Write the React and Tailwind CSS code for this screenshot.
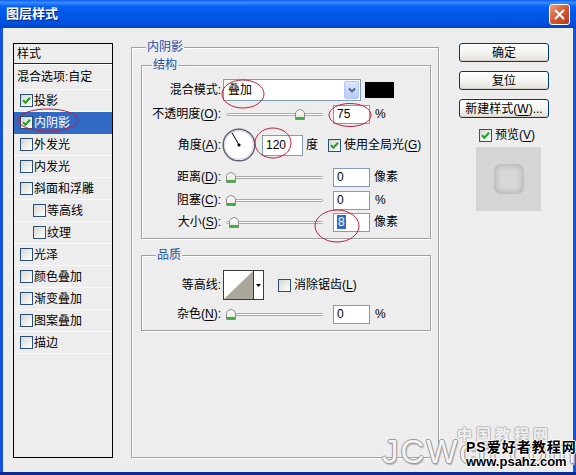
import React from "react";

function Check({ checked }) {
  return (
    <span className="flex h-[13px] w-[13px] shrink-0 items-center justify-center border border-[#2A4F7A] bg-linear-to-br from-[#D6D6D0] to-white">
      {checked && (
        <svg width="9" height="9" viewBox="0 0 9 9">
          <path d="M1 4.3 L3.4 6.8 L8 1.8" fill="none" stroke="#21A121" strokeWidth="2" />
        </svg>
      )}
    </span>
  );
}

function U({ children }) {
  return <span className="underline underline-offset-[2px]">{children}</span>;
}

function Label({ children }) {
  return <div className="w-[79px] shrink-0 text-right leading-[14px]">{children}</div>;
}

function Thumb({ left }) {
  return (
    <svg className="absolute top-[2px]" style={{ left }} width="10" height="11" viewBox="0 0 10 11">
      <defs>
        <linearGradient id="tg" x1="0" y1="0" x2="0" y2="1">
          <stop offset="0" stopColor="#FFFFFF" />
          <stop offset="1" stopColor="#E2E2DC" />
        </linearGradient>
      </defs>
      <path d="M0.5 5 Q0.5 1.5 5 0.5 Q9.5 1.5 9.5 5 L9.5 10.5 L0.5 10.5 Z" fill="url(#tg)" stroke="#8C8C8C" strokeWidth="1" />
      <rect x="1" y="8" width="8" height="2.2" fill="#3DAF3D" />
    </svg>
  );
}

function Slider({ left }) {
  return (
    <div className="relative ml-[5px] h-[14px] w-[97px] shrink-0">
      <div className="absolute left-0 right-0 top-[6px] h-[3px] rounded-full border border-[#A9A9A9] bg-[#FAFAFA]" />
      <Thumb left={left} />
    </div>
  );
}

function Input({ children }) {
  return (
    <div className="ml-[10px] flex h-[19px] w-[37px] shrink-0 items-center border border-[#7F9DB9] bg-white pl-[3px] leading-[14px]">
      {children}
    </div>
  );
}

function Group({ title, labelPos, className, children }) {
  return (
    <div
      className={
        "relative shrink-0 border border-[#A2A2A2] shadow-[1px_1px_0_#ffffff,inset_1px_1px_0_#ffffff] " +
        className
      }
    >
      <div className={"absolute top-[-8px] bg-[#EDEDED] px-[1px] leading-[14px] text-[#1D4FA6] " + labelPos}>
        {title}
      </div>
      {children}
    </div>
  );
}

function Button({ children }) {
  return (
    <div className="flex h-[19px] w-[90px] items-center justify-center rounded-[3px] border border-[#003C74] bg-linear-to-b from-white via-[#F4F4F0] to-[#E2E1DA] leading-[14px] shadow-[inset_0_-1px_0_#D6D0C5]">
      {children}
    </div>
  );
}

const items = [
  { t: "投影", c: true },
  { t: "内阴影", c: true, sel: true },
  { t: "外发光" },
  { t: "内发光" },
  { t: "斜面和浮雕" },
  { t: "等高线", ind: true },
  { t: "纹理", ind: true },
  { t: "光泽" },
  { t: "颜色叠加" },
  { t: "渐变叠加" },
  { t: "图案叠加" },
  { t: "描边" },
];

export default function App() {
  return (
    <div className="relative flex h-[475px] w-[576px] flex-col overflow-hidden border-b-[3px] border-[#0C2C93] bg-[#1453DB] font-['Liberation_Sans','Noto_Sans_CJK_SC',sans-serif] text-[12px] text-black">
      {/* Title bar */}
      <div className="flex h-[28px] shrink-0 items-center justify-between bg-[linear-gradient(to_bottom,#0A5EF0_0%,#3B8CFB_9%,#0763F4_22%,#0057E7_50%,#0053E0_80%,#0044CD_100%)] pl-[6px] pr-[6px]">
        <span className="text-[13px] font-bold leading-[16px] text-white [text-shadow:1px_1px_0_#0A2780]">图层样式</span>
        <div className="flex h-[21px] w-[21px] items-center justify-center rounded-[3px] border border-white bg-linear-to-br from-[#EC9A7C] via-[#D5582F] to-[#B8381A]">
          <svg width="11" height="11" viewBox="0 0 11 11">
            <path d="M1.5 1.5 L9.5 9.5 M9.5 1.5 L1.5 9.5" stroke="#fff" strokeWidth="2" strokeLinecap="round" />
          </svg>
        </div>
      </div>

      {/* Client area */}
      <div className="mx-[3px] flex h-[444px] items-start bg-[#EDEDED]">
        {/* Style list */}
        <div className="ml-[10px] mt-[15px] flex h-[415px] w-[100px] shrink-0 flex-col border border-black">
          <div className="flex h-[20px] items-center border-b border-[#2A2A2A] pl-[3px] leading-[14px] shadow-[0_1px_0_#ffffff]">样式</div>
          <div className="flex h-[26px] items-center border-b border-[#FBFBFB] pl-[3px] leading-[14px]">混合选项:自定</div>
          {items.map((it) => (
            <div
              key={it.t}
              className={
                "flex h-[22px] items-center gap-[1px] border-b leading-[14px] " +
                (it.sel ? "border-[#316AC5] bg-[#316AC5] text-white " : "border-[#FBFBFB] ") +
                (it.ind ? "pl-[19px]" : "pl-[6px]")
              }
            >
              <Check checked={it.c} />
              <span>{it.t}</span>
            </div>
          ))}
        </div>

        {/* Inner shadow panel */}
        <Group title="内阴影" labelPos="left-[14px]" className="ml-[18px] mt-[19px] h-[411px] w-[308px]">
          <Group title="结构" labelPos="left-[10px]" className="ml-[9px] mt-[17px] h-[174px] w-[290px]">
            <div className="flex flex-col pt-[13px]">
              {/* Blend mode */}
              <div className="flex h-[22px] items-center">
                <Label>混合模式:</Label>
                <div className="ml-[2px] flex h-[22px] w-[138px] items-center justify-between border border-[#7F9DB9] bg-white pl-[4px] pr-[1px]">
                  <span className="leading-[14px]">叠加</span>
                  <div className="flex h-[18px] w-[15px] items-center justify-center rounded-[2px] border border-[#B4C8F6] bg-linear-to-b from-[#DCE6FE] to-[#B6CAF7]">
                    <svg width="8" height="6" viewBox="0 0 8 6">
                      <path d="M1 1.5 L4 4.5 L7 1.5" fill="none" stroke="#4D6185" strokeWidth="1.8" />
                    </svg>
                  </div>
                </div>
                <div className="ml-[4px] h-[16px] w-[29px] bg-black" />
              </div>
              {/* Opacity */}
              <div className="mt-[3px] flex h-[20px] items-center">
                <Label>
                  不透明度(<U>O</U>):
                </Label>
                <Slider left={69} />
                <Input>75</Input>
                <span className="ml-[5px] leading-[14px]">%</span>
              </div>
              {/* Angle */}
              <div className="mt-[4px] flex h-[34px] items-center">
                <Label>
                  角度(<U>A</U>):
                </Label>
                <svg width="34" height="34" viewBox="0 0 34 34" className="ml-[1px] shrink-0">
                  <circle cx="17" cy="17" r="15.8" fill="#fff" stroke="#5E6271" strokeWidth="1.5" />
                  <circle cx="17" cy="17" r="14.4" fill="none" stroke="#D3D6E0" strokeWidth="1" />
                  <line x1="17" y1="17" x2="10" y2="4.9" stroke="#000" strokeWidth="1" />
                  <circle cx="17" cy="17" r="1.6" fill="#000" />
                </svg>
                <div className="ml-[6px] flex h-[21px] w-[41px] shrink-0 items-center border border-[#7F9DB9] bg-white pl-[3px] leading-[14px]">120</div>
                <span className="ml-[3px] leading-[14px]">度</span>
                <div className="ml-[10px] flex items-center gap-[3px]">
                  <Check checked />
                  <span className="leading-[14px]">
                    使用全局光(<U>G</U>)
                  </span>
                </div>
              </div>
              {/* Distance */}
              <div className="mt-[5px] flex h-[20px] items-center">
                <Label>
                  距离(<U>D</U>):
                </Label>
                <Slider left={0} />
                <Input>0</Input>
                <span className="ml-[4px] leading-[14px]">像素</span>
              </div>
              {/* Choke */}
              <div className="mt-[3px] flex h-[20px] items-center">
                <Label>
                  阻塞(<U>C</U>):
                </Label>
                <Slider left={0} />
                <Input>0</Input>
                <span className="ml-[5px] leading-[14px]">%</span>
              </div>
              {/* Size */}
              <div className="mt-[2px] flex h-[20px] items-center">
                <Label>
                  大小(<U>S</U>):
                </Label>
                <Slider left={3} />
                <Input>
                  <span className="bg-[#316AC5] px-[1px] text-white">8</span>
                </Input>
                <span className="ml-[4px] leading-[14px]">像素</span>
              </div>
            </div>
          </Group>

          <Group title="品质" labelPos="left-[14px]" className="ml-[9px] mt-[16px] h-[76px] w-[290px]">
            <div className="flex flex-col pt-[14px]">
              <div className="flex h-[30px] items-center">
                <Label>等高线:</Label>
                <div className="ml-[2px] flex h-[30px] w-[41px] shrink-0 border border-[#3A3A3A] bg-white">
                  <svg width="29" height="28" viewBox="0 0 29 28" className="shrink-0">
                    <polygon points="0,28 29,0 29,28" fill="#ACA79B" />
                  </svg>
                  <div className="flex w-[10px] items-center justify-center border-l border-[#3A3A3A]">
                    <svg width="5" height="3" viewBox="0 0 5 3">
                      <polygon points="0,0 5,0 2.5,3" fill="#000" />
                    </svg>
                  </div>
                </div>
                <div className="ml-[14px] flex items-center gap-[3px]">
                  <Check />
                  <span className="leading-[14px]">
                    消除锯齿(<U>L</U>)
                  </span>
                </div>
              </div>
              <div className="mt-[4px] flex h-[20px] items-center">
                <Label>
                  杂色(<U>N</U>):
                </Label>
                <Slider left={0} />
                <Input>0</Input>
                <span className="ml-[5px] leading-[14px]">%</span>
              </div>
            </div>
          </Group>
        </Group>

        {/* Right buttons */}
        <div className="ml-[20px] mt-[15px] flex w-[90px] shrink-0 flex-col">
          <Button>确定</Button>
          <div className="mt-[9px]">
            <Button>复位</Button>
          </div>
          <div className="mt-[9px]">
            <Button>
              新建样式(<U>W</U>)...
            </Button>
          </div>
          <div className="ml-[20px] mt-[10px] flex h-[14px] items-center gap-[3px]">
            <Check checked />
            <span className="leading-[14px]">
              预览(<U>V</U>)
            </span>
          </div>
          <div className="ml-[17px] mt-[5px] flex h-[64px] w-[65px] items-center justify-center bg-[#D5D5D5]">
            <div className="h-[30px] w-[30px] rounded-[7px] bg-[#D8D8D8] shadow-[inset_0_0_6px_2px_rgba(0,0,0,0.16)]" />
          </div>
        </div>
      </div>

      {/* Red annotation ellipses */}
      <svg className="pointer-events-none absolute left-0 top-0" width="576" height="475" viewBox="0 0 576 475">
        <g fill="none" stroke="#C0203A" strokeWidth="1">
          <ellipse cx="48" cy="120" rx="30" ry="11" />
          <ellipse cx="243" cy="94" rx="21" ry="14" />
          <ellipse cx="350" cy="115" rx="21" ry="11.5" />
          <ellipse cx="273" cy="143" rx="18" ry="15" />
          <ellipse cx="337" cy="226" rx="22" ry="16" />
        </g>
      </svg>

      {/* Watermark */}
      <div className="pointer-events-none absolute left-[382px] top-[435px] whitespace-nowrap text-[33px] leading-[34px] tracking-[2px] text-[#F3F3F3] [text-shadow:1px_0_0_#9A9A9A,-1px_0_0_#9A9A9A,0_1px_0_#9A9A9A,0_-1px_0_#9A9A9A,1px_2px_1px_#B5B5B5]">
        JCWcn.com
      </div>
      <div className="pointer-events-none absolute left-[457px] top-[427px] whitespace-nowrap text-[15px] font-bold leading-[16px] tracking-[4px] text-[#EFEFEF] [text-shadow:1px_0_0_#BDBDBD,-1px_0_0_#BDBDBD,0_1px_0_#BDBDBD,0_-1px_0_#BDBDBD]">
        中国教程网
      </div>
      <div className="pointer-events-none absolute left-[466px] top-[439px] whitespace-nowrap text-[14px] font-bold leading-[16px] tracking-[1px] text-black [text-shadow:1px_0_0_#fff,-1px_0_0_#fff,0_1px_0_#fff,0_-1px_0_#fff]">
        PS爱好者教程网
      </div>
      <div className="pointer-events-none absolute left-[466px] top-[454px] whitespace-nowrap text-[13px] font-bold leading-[15px] text-black [text-shadow:1px_0_0_#fff,-1px_0_0_#fff,0_1px_0_#fff,0_-1px_0_#fff]">
        www.psahz.com
      </div>
    </div>
  );
}
